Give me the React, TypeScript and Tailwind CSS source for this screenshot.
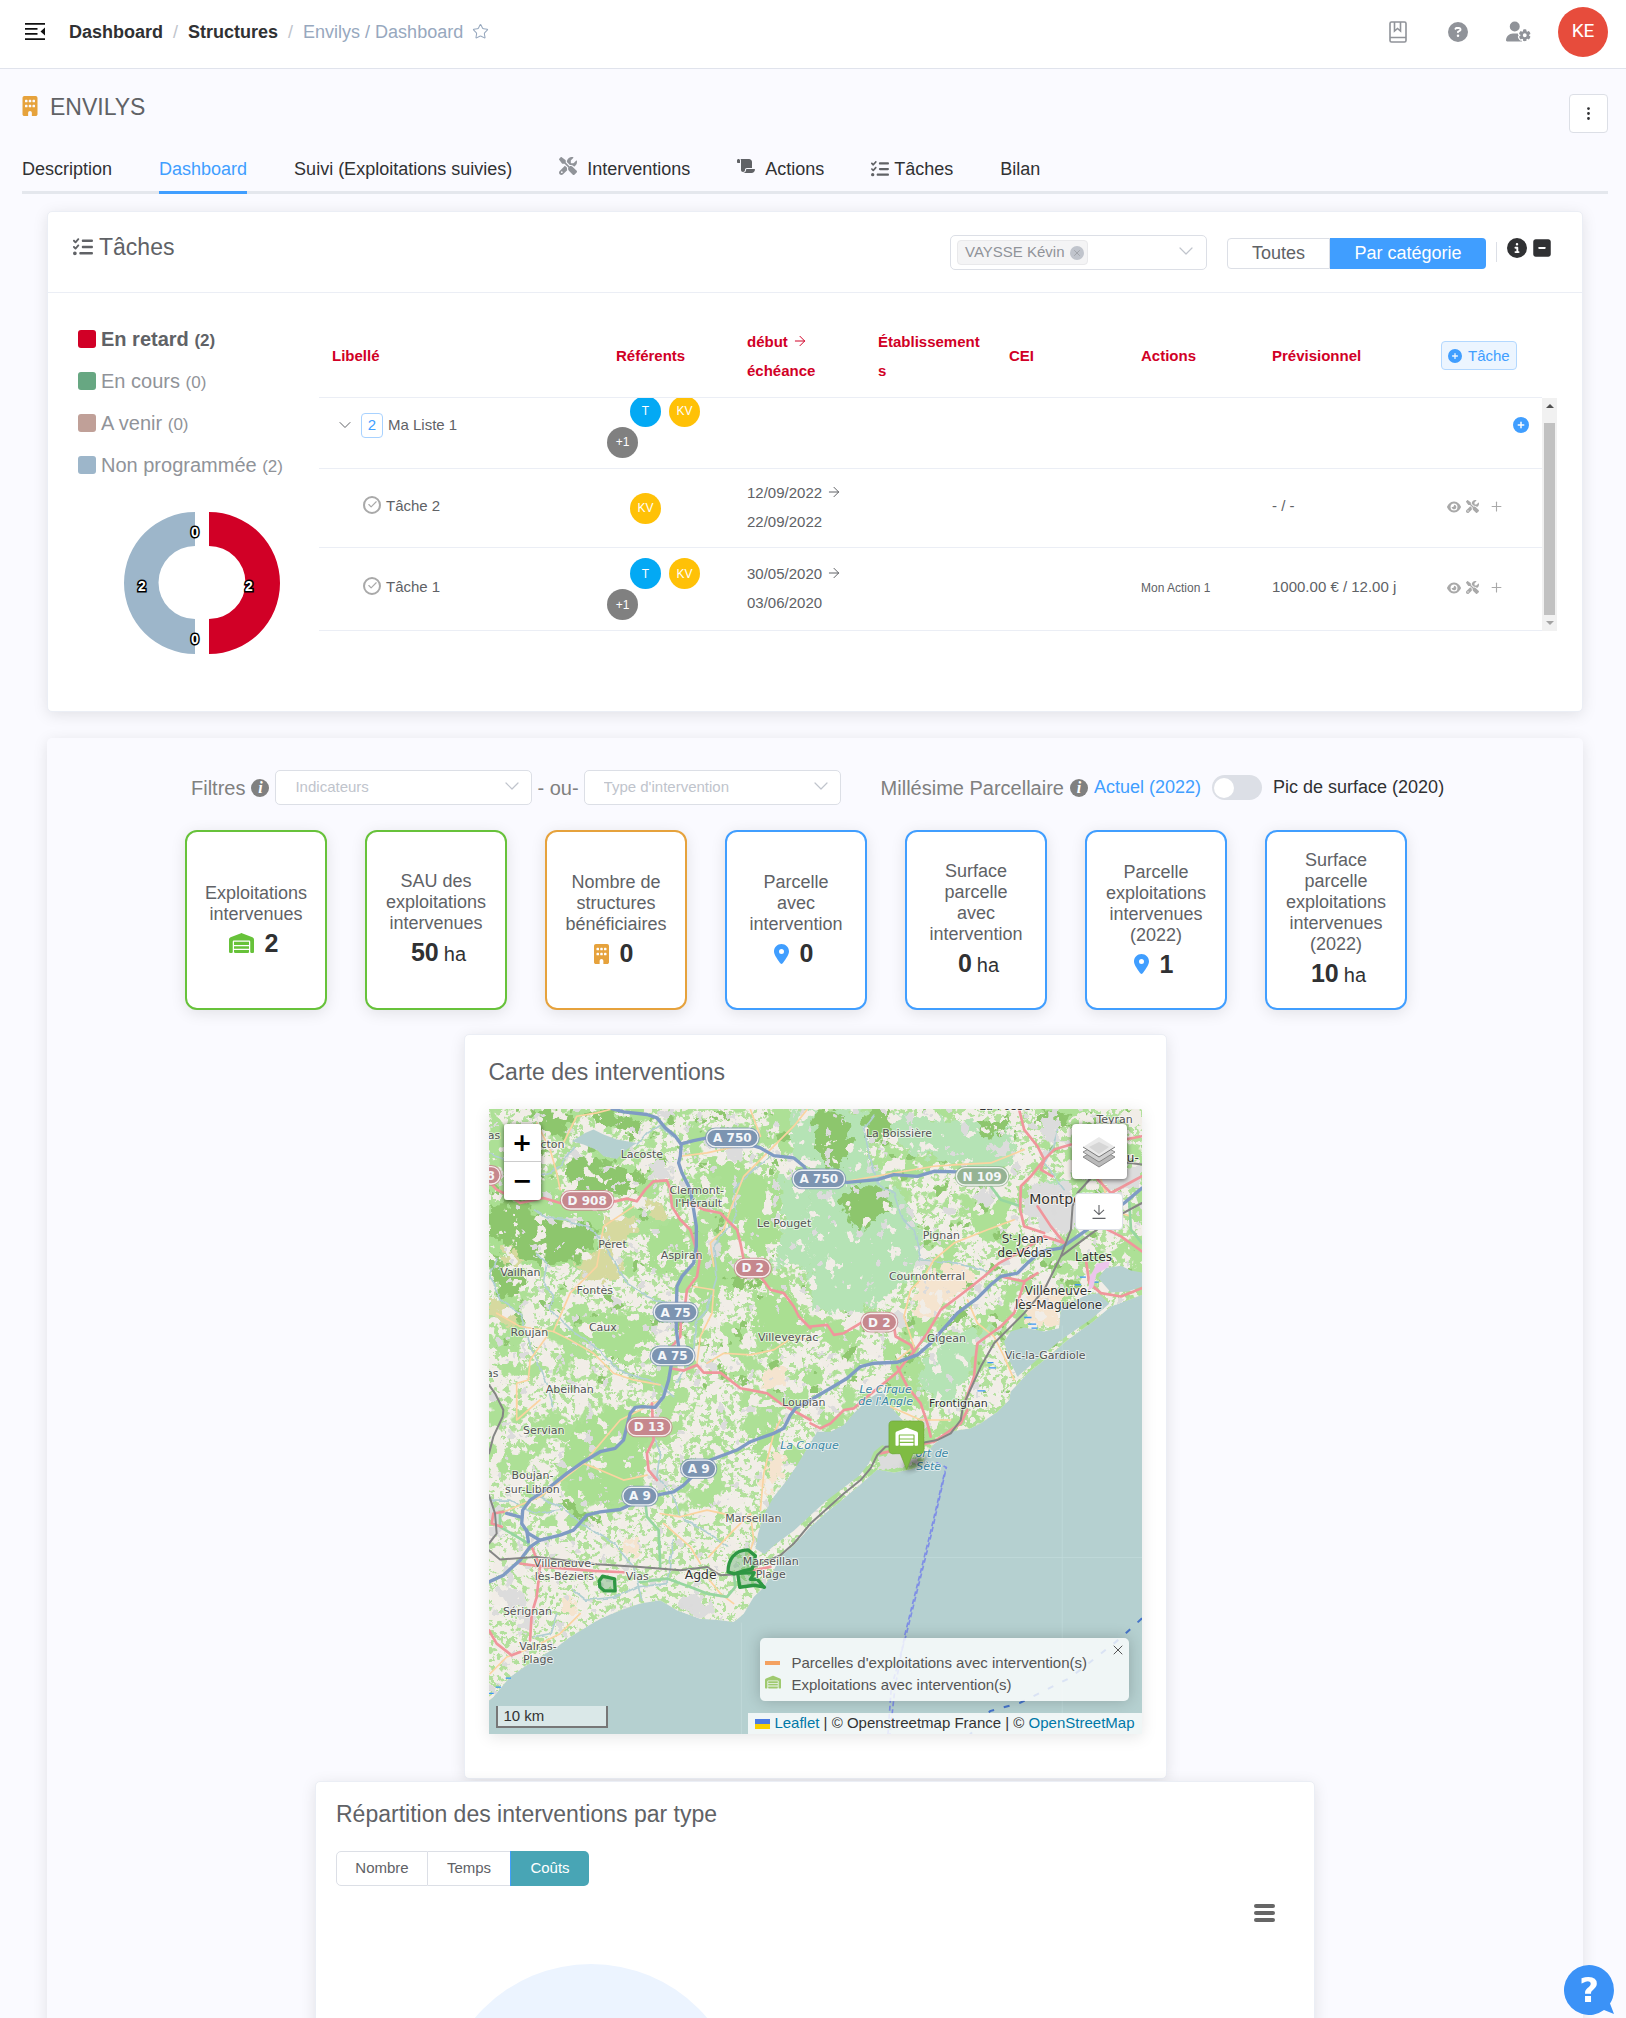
import React from "react";
import {
  FaBuilding,
  FaCircleInfo,
  FaCirclePlus,
  FaCircleQuestion,
  FaEye,
  FaListCheck,
  FaLocationDot,
  FaScrewdriverWrench,
  FaScroll,
  FaSquareMinus,
  FaUserGear,
  FaWarehouse,
} from "react-icons/fa6";
import { ArrowRight, Check, ChevronDown, EllipsisVertical, Plus, Star, X } from "lucide-react";

const cardShadow = "shadow-[0_3px_15px_rgba(0,0,0,0.1)]";

/* ---------- small icons ---------- */

function MenuFoldIcon() {
  return (
    <svg width="20" height="18" viewBox="0 0 20 18" fill="#111" aria-hidden="true">
      <path d="M0 0h20v1.700H0zM0 5h12.500v1.700H0zM0 10h12.500v1.700H0zM0 15.300h20V17H0zM20 4.500v8l-4.500-4z" />
    </svg>
  );
}

function BookIcon() {
  return (
    <svg width="18" height="22" viewBox="0 0 18 22" fill="none" stroke="#909399" strokeWidth="1.6" aria-hidden="true">
      <rect x="1" y="1" width="16" height="20" rx="1.500" />
      <path d="M1 16.500h16M5.500 1v9l3-2.500 3 2.500V1" />
    </svg>
  );
}

function ItalicInfo() {
  return (
    <span className="inline-flex size-[18px] shrink-0 items-center justify-center rounded-full bg-[#808080] font-['Liberation_Serif',serif] text-[16px] leading-none font-bold text-white italic">
      i
    </span>
  );
}

/* ---------- header ---------- */

function Header() {
  return (
    <header className="flex h-[69px] shrink-0 items-center border-b border-[#e0e3ec] bg-white pr-[18px] pb-[5px] pl-[25px]">
      <button aria-label="Replier le menu" className="mr-[24px]">
        <MenuFoldIcon />
      </button>
      <nav aria-label="Fil d'Ariane" className="flex items-center text-[18px] leading-[22px] text-[#303133]">
        <a href="#dashboard" className="font-bold">Dashboard</a>
        <span className="mx-[10px] text-[#c0c4cc]">/</span>
        <a href="#structures" className="font-bold">Structures</a>
        <span className="mx-[10px] text-[#c0c4cc]">/</span>
        <span className="text-[#97a8be]">Envilys / Dashboard</span>
        <button aria-label="Ajouter aux favoris" className="ml-[9px] text-[#97a8be]">
          <Star size={17} strokeWidth={1.5} />
        </button>
      </nav>
      <div className="ml-auto flex items-center text-[#909399]">
        <button aria-label="Documentation" className="mr-[41px]"><BookIcon /></button>
        <button aria-label="Aide" className="mr-[38px]"><FaCircleQuestion size={20} /></button>
        <button aria-label="Paramètres utilisateur" className="mr-[27px]"><FaUserGear size={25} /></button>
        <button className="size-[50px] rounded-full bg-[#e74c3c] font-[Roboto,sans-serif] text-[19px] text-white">KE</button>
      </div>
    </header>
  );
}

function TitleAndTabs() {
  const tab = "flex items-center pb-[10px] -mb-[3px] border-b-[3px]";
  return (
    <>
      <div className="flex items-start justify-between">
        <h1 className="flex items-center gap-[12px] text-[23px] leading-[26px] text-[#606266]">
          <FaBuilding size={20} className="-mx-[2px] mb-[3px] text-[#e6a23c]" />
          ENVILYS
        </h1>
        <button aria-label="Plus d'actions" className="flex h-[39px] w-[39px] items-center justify-center rounded-[4px] border border-[#dcdfe6] bg-white text-[#303133]">
          <EllipsisVertical size={17} />
        </button>
      </div>
      <nav className="mt-[24px] flex gap-[47px] border-b-[3px] border-[#e4e7ed] text-[18px] leading-[21px] text-[#303133]">
        <a href="#description" className={tab + " border-transparent"}>Description</a>
        <a href="#dashboard" aria-current="page" className={tab + " border-[#409eff] text-[#409eff]"}>Dashboard</a>
        <a href="#suivi" className={tab + " border-transparent"}>Suivi (Exploitations suivies)</a>
        <a href="#interventions" className={tab + " gap-[10px] border-transparent"}>
          <FaScrewdriverWrench size={18} className="mb-[6px] text-[#909399]" />Interventions
        </a>
        <a href="#actions" className={tab + " gap-[10px] border-transparent"}>
          <FaScroll size={18} className="mb-[6px] text-[#606266]" />Actions
        </a>
        <a href="#taches" className={tab + " gap-[5px] border-transparent"}>
          <FaListCheck size={18} className="text-[#606266]" />Tâches
        </a>
        <a href="#bilan" className={tab + " border-transparent"}>Bilan</a>
      </nav>
    </>
  );
}

/* ---------- tasks card ---------- */

const statuses = [
  { label: "En retard", count: 2, swatch: "bg-[#d10026]", active: true },
  { label: "En cours", count: 0, swatch: "bg-[#67a782]", active: false },
  { label: "A venir", count: 0, swatch: "bg-[#c0a098]", active: false },
  { label: "Non programmée", count: 2, swatch: "bg-[#9db6ca]", active: false },
];

function Donut() {
  const label = {
    fontSize: 14,
    fontWeight: 700,
    fill: "#fff",
    stroke: "#000",
    strokeWidth: 3,
    paintOrder: "stroke",
    textAnchor: "middle" as const,
    fontFamily: "Liberation Sans, sans-serif",
  };
  return (
    <svg width="156" height="144" viewBox="0 0 156 144" role="img" aria-label="Répartition des tâches par statut">
      <path d="M71 1A71 71 0 0 0 71 143V108A36.500 36.500 0 0 1 71 35Z" fill="#9db6ca" />
      <path d="M85 1A71 71 0 0 1 85 143V108A36.500 36.500 0 0 0 85 35Z" fill="#d10026" />
      <text x="71" y="26" {...label}>0</text>
      <text x="71" y="133" {...label}>0</text>
      <text x="18" y="80" {...label}>2</text>
      <text x="125" y="80" {...label}>2</text>
    </svg>
  );
}

function Avatar({ text, color }: { text: string; color: string }) {
  return (
    <span className={"flex size-[31px] items-center justify-center rounded-full text-[12px] leading-none text-white " + color}>
      {text}
    </span>
  );
}

function ThreeAvatars() {
  return (
    <div>
      <div className="ml-[23px] flex gap-[8px]">
        <Avatar text="T" color="bg-[#03a9f4]" />
        <Avatar text="KV" color="bg-[#ffc107]" />
      </div>
      <Avatar text="+1" color="bg-[#808080]" />
    </div>
  );
}

function Dates({ from, to }: { from: string; to: string }) {
  return (
    <span className="block leading-[29px]">
      <span className="flex items-center gap-[4px]">{from} <ArrowRight size={16} strokeWidth={1.5} /></span>
      {to}
    </span>
  );
}

function RowActions() {
  return (
    <div className="ml-[57px] flex items-center pb-[3px] text-[#a9a9a9]">
      <button aria-label="Voir"><FaEye size={14} /></button>
      <button aria-label="Intervention" className="ml-[5px]"><FaScrewdriverWrench size={13} /></button>
      <button aria-label="Ajouter" className="ml-[10px]"><Plus size={15} strokeWidth={1.8} /></button>
    </div>
  );
}

function Columns() {
  return (
    <colgroup>
      <col className="w-[284px]" />
      <col className="w-[131px]" />
      <col className="w-[131px]" />
      <col className="w-[131px]" />
      <col className="w-[132px]" />
      <col className="w-[131px]" />
      <col className="w-[131px]" />
      <col />
    </colgroup>
  );
}

function TaskTable() {
  const th = "px-[13px] pb-[3px] text-left font-bold";
  const td = "px-[13px] pb-[3px]";
  const row = "border-b border-[#ebeef5]";
  return (
    <div className="min-w-0 flex-1 text-[15px] text-[#606266]">
      <div className="pr-[15px]">
        <table className="w-full table-fixed">
          <Columns />
          <thead>
            <tr className="h-[79px] border-b border-[#ebeef5] leading-[29px] text-[#d10026]">
              <th className={th}>Libellé</th>
              <th className={th}>Référents</th>
              <th className={th}>
                <span className="flex items-center gap-[4px]">début <ArrowRight size={16} strokeWidth={1.5} /></span>
                échéance
              </th>
              <th className={th + " break-all"}>Établissements</th>
              <th className={th}>CEI</th>
              <th className={th}>Actions</th>
              <th className={th}>Prévisionnel</th>
              <th className="pb-[3px] text-left font-normal">
                <button className="ml-[51px] flex h-[29px] items-center gap-[6px] rounded-[4px] border border-[#b3d8ff] bg-[#ecf5ff] px-[6px] text-[15px] text-[#409eff]">
                  <FaCirclePlus size={14} />Tâche
                </button>
              </th>
            </tr>
          </thead>
        </table>
      </div>
      <div className="flex h-[233px]">
        <div className="min-w-0 flex-1 overflow-hidden">
          <table className="-mt-[12px] w-full table-fixed">
            <Columns />
            <tbody>
              <tr className={row + " h-[83px]"}>
                <td>
                  <div className="ml-[16px] flex items-center pb-[3px]">
                    <button aria-label="Replier la liste" className="text-[#606266]"><ChevronDown size={20} strokeWidth={1.2} /></button>
                    <span className="ml-[6px] flex h-[25px] w-[22px] items-center justify-center rounded-[4px] border border-[#a8d2ff] text-[#409eff]">2</span>
                    <span className="ml-[5px]">Ma Liste 1</span>
                  </div>
                </td>
                <td className="pl-[4px]"><ThreeAvatars /></td>
                <td /><td /><td /><td /><td />
                <td>
                  <button aria-label="Ajouter une tâche" className="mr-[13px] mb-[4px] ml-auto block text-[#409eff]"><FaCirclePlus size={16} /></button>
                </td>
              </tr>
              <tr className={row + " h-[79px]"}>
                <td><TaskName name="Tâche 2" /></td>
                <td className="pl-[27px]"><Avatar text="KV" color="bg-[#ffc107]" /></td>
                <td className={td}><Dates from="12/09/2022" to="22/09/2022" /></td>
                <td /><td /><td />
                <td className={td}>- / -</td>
                <td><RowActions /></td>
              </tr>
              <tr className={row + " h-[83px]"}>
                <td><TaskName name="Tâche 1" /></td>
                <td className="pl-[4px]"><ThreeAvatars /></td>
                <td className={td}><Dates from="30/05/2020" to="03/06/2020" /></td>
                <td /><td />
                <td className={td + " text-[12px]"}>Mon Action 1</td>
                <td className={td + " whitespace-nowrap"}>1000.00 € / 12.00 j</td>
                <td><RowActions /></td>
              </tr>
            </tbody>
          </table>
        </div>
        <div className="flex w-[15px] flex-col items-center justify-between bg-[#f1f1f1] py-[6px]" aria-hidden="true">
          <span className="border-x-4 border-b-4 border-x-transparent border-b-[#505050]" />
          <span className="mt-[15px] mb-[6px] w-[11px] flex-1 bg-[#c1c1c1]" />
          <span className="border-x-4 border-t-4 border-x-transparent border-t-[#a3a3a3]" />
        </div>
      </div>
    </div>
  );
}

function TaskName({ name }: { name: string }) {
  return (
    <div className="ml-[44px] flex items-center gap-[5px] pb-[3px]">
      <button aria-label={"Terminer " + name} className="mb-[4px] flex size-[18px] items-center justify-center rounded-full border-2 border-[#a9a9a9] text-[#a9a9a9]">
        <Check size={11} strokeWidth={2.5} />
      </button>
      {name}
    </div>
  );
}

function TasksCard() {
  return (
    <section className={"mx-[25px] mt-[17px] rounded-[5px] border border-[#ebeef5] bg-white " + cardShadow}>
      <div className="flex h-[81px] items-start border-b border-[#ebeef5] px-[25px] pt-[23px]">
        <h2 className="-mt-[2px] flex items-center gap-[6px] text-[23px] leading-[28px] text-[#606266]">
          <FaListCheck size={20} />Tâches
        </h2>
        <div className="ml-auto flex h-[35px] w-[257px] items-center rounded-[5px] border border-[#dcdfe6] px-[6px]">
          <span className="flex h-[25px] items-center gap-[5px] rounded-[4px] border border-[#e9e9eb] bg-[#f4f4f5] pr-[3px] pl-[7px] text-[15px] whitespace-nowrap text-[#909399]">
            VAYSSE Kévin
            <button aria-label="Retirer VAYSSE Kévin" className="flex size-[14px] items-center justify-center rounded-full bg-[#c0c4cc]">
              <X size={10} strokeWidth={1.5} />
            </button>
          </span>
          <button aria-label="Ouvrir la liste" className="mr-[2px] mb-[4px] ml-auto text-[#c0c4cc]"><ChevronDown size={24} strokeWidth={1.2} /></button>
        </div>
        <div role="radiogroup" aria-label="Affichage" className="mt-[3px] ml-[20px] flex h-[31px] text-[18px] text-[#606266]">
          <label className="flex w-[103px] items-center justify-center rounded-l-[4px] border border-[#dcdfe6]">
            <input type="radio" name="affichage" className="sr-only" />Toutes
          </label>
          <label className="flex w-[156px] items-center justify-center rounded-r-[4px] bg-[#409eff] text-white">
            <input type="radio" name="affichage" defaultChecked className="sr-only" />Par catégorie
          </label>
        </div>
        <span className="mt-[7px] ml-[10px] h-[20px] w-px bg-[#dcdfe6]" />
        <button aria-label="Informations" className="mt-[3px] ml-[10px] text-[#303133]"><FaCircleInfo size={20} /></button>
        <button aria-label="Réduire" className="mt-[3px] ml-[5px] text-[#303133]"><FaSquareMinus size={20} /></button>
        <span className="w-[5px]" />
      </div>
      <div className="flex min-h-[418px] pt-[25px] pr-[25px]">
        <div className="w-[271px] shrink-0 pl-[30px]">
          <ul>
            {statuses.map((s) => (
              <li key={s.label}>
                <button className={"flex h-[42px] items-center gap-[5px] text-[20px] whitespace-nowrap " + (s.active ? "font-bold text-[#606266]" : "text-[#909399]")}>
                  <span className={"size-[18px] rounded-[3px] " + s.swatch} />
                  <span>{s.label} <span className="text-[17px]">({s.count})</span></span>
                </button>
              </li>
            ))}
          </ul>
          <div className="mt-[25px] ml-[46px]"><Donut /></div>
        </div>
        <TaskTable />
      </div>
    </section>
  );
}

/* ---------- indicators ---------- */

function FilterSelect({ label, width }: { label: string; width: string }) {
  return (
    <span className={"relative " + width}>
      <select aria-label={label} defaultValue="" className="h-[35px] w-full appearance-none rounded-[5px] border border-[#dcdfe6] bg-white pl-[19px] text-[15px] text-[#c0c4cc]">
        <option value="">{label}</option>
      </select>
      <ChevronDown size={24} strokeWidth={1.2} className="pointer-events-none absolute top-[4px] right-[8px] text-[#c0c4cc]" />
    </span>
  );
}

function Filters() {
  return (
    <div className="ml-[144px] flex items-center text-[20px] whitespace-nowrap text-[#808080]">
      <span className="mr-[6px]">Filtres</span>
      <ItalicInfo />
      <span className="w-[6px]" />
      <FilterSelect label="Indicateurs" width="w-[257px]" />
      <span className="mx-[5px]">- ou-</span>
      <FilterSelect label="Type d'intervention" width="w-[257px]" />
      <span className="mr-[6px] ml-[40px]">Millésime Parcellaire</span>
      <ItalicInfo />
      <label className="ml-[6px] flex items-center text-[18px] text-[#303133]">
        <span className="mr-[11px] text-[#409eff]">Actuel (2022)</span>
        <input type="checkbox" role="switch" className="peer sr-only" />
        <span className="mr-[11px] flex h-[25px] w-[50px] items-center rounded-full bg-[#dcdfe6] px-[2px]">
          <span className="size-[20px] rounded-full bg-white" />
        </span>
        Pic de surface (2020)
      </label>
    </div>
  );
}

const pin = <FaLocationDot className="h-[20px] w-[15px] text-[#409eff]" />;

const indicators = [
  { border: "border-[#67c23a]", label: "Exploitations intervenues", icon: <FaWarehouse className="h-[20px] w-[25px] text-[#67c23a]" />, value: "2" },
  { border: "border-[#67c23a]", label: "SAU des exploitations intervenues", value: "50", unit: "ha" },
  { border: "border-[#e6a23c]", label: "Nombre de structures bénéficiaires", icon: <FaBuilding className="h-[20px] w-[15px] text-[#e6a23c]" />, value: "0" },
  { border: "border-[#409eff]", label: "Parcelle avec intervention", icon: pin, value: "0" },
  { border: "border-[#409eff]", label: "Surface parcelle avec intervention", value: "0", unit: "ha" },
  { border: "border-[#409eff]", label: "Parcelle exploitations intervenues (2022)", icon: pin, value: "1" },
  { border: "border-[#409eff]", label: "Surface parcelle exploitations intervenues (2022)", value: "10", unit: "ha" },
];

function Indicators() {
  return (
    <div className="mt-[25px] ml-[138px] flex gap-[38px]">
      {indicators.map((it) => (
        <article key={it.label} className={"flex h-[180px] w-[142px] flex-col items-center justify-center rounded-[12px] border-2 bg-white px-[17px] text-center shadow-[0_3px_15px_rgba(0,0,0,0.1)] " + it.border}>
          <p className="text-[18px] leading-[21px] text-[#606266]">{it.label}</p>
          <p className={"mt-[4px] flex items-baseline leading-[29px] text-[#303133] " + (it.unit ? "pl-[5px]" : "pr-[5px]")}>
            {it.icon && <span className="mr-[11px] self-center">{it.icon}</span>}
            <strong className="text-[25px]">{it.value}</strong>
            {it.unit && <span className="ml-[5px] text-[20px]">{it.unit}</span>}
          </p>
        </article>
      ))}
    </div>
  );
}

/* ---------- map ---------- */

type Pt = [number, number];
/* the map tiles are drawn in four quadrants; each has its own origin */
const line = (dx: number, dy: number, pts: Pt[]) => pts.map(([x, y]) => `${x + dx},${y + dy}`).join(" ");
const nw = (pts: Pt[]) => line(-87, -237, pts);
const ne = (pts: Pt[]) => line(963, -237, pts);
const sw = (pts: Pt[]) => line(-87, 873, pts);
const se = (pts: Pt[]) => line(963, 873, pts);

const land =
  "0,0 1956,0 1956,558 " +
  ne([[940, 815], [900, 830], [850, 872], [770, 930], [700, 990], [650, 1030], [600, 1085]]) + " " +
  se([[595, 0], [560, 35], [510, 70], [480, 85], [430, 92], [400, 112], [370, 132], [345, 160], [335, 195], [300, 208], [250, 217], [200, 208], [165, 240], [100, 295], [50, 335], [0, 380]]) + " " +
  sw([[1000, 435], [960, 470], [935, 520], [910, 560], [880, 590], [850, 640], [820, 665], [780, 660], [720, 655], [650, 630], [600, 600], [540, 610], [480, 630], [420, 655], [370, 685], [330, 710], [290, 740], [240, 770], [200, 795], [150, 830], [100, 890], [87, 900]]);

const waters = [
  sw([[1010, 195], [980, 240], [940, 290], [912, 340], [893, 400], [885, 445], [912, 462], [945, 432], [1000, 392], [1050, 345]]) + " " +
    se([[50, 300], [100, 262], [145, 228], [175, 190], [190, 155], [215, 135], [245, 150], [290, 130], [300, 110], [275, 60], [240, 20], [215, -30], [170, 0], [130, 40], [100, 75], [60, 95], [20, 95]]),
  ne([[600, 905], [640, 893], [700, 905], [745, 895], [750, 830], [830, 795], [862, 790], [895, 822], [840, 868], [750, 930], [690, 980], [620, 1040], [595, 990], [580, 935]]),
  ne([[862, 745], [885, 715], [930, 708], [960, 722], [993, 728], [993, 770], [950, 785], [900, 788]]),
  nw([[335, 335], [375, 310], [400, 300], [430, 315], [470, 330], [530, 340], [500, 360], [470, 388], [430, 380], [412, 362], [370, 345]]),
];

const forests = [
  nw([[87, 530], [190, 515], [230, 530], [220, 560], [300, 570], [370, 580], [410, 600], [400, 650], [340, 700], [270, 705], [200, 690], [130, 640], [87, 620]]),
  nw([[210, 240], [290, 237], [340, 260], [300, 320], [240, 300]]),
  nw([[320, 400], [370, 380], [440, 410], [510, 420], [560, 440], [500, 500], [440, 480], [360, 490], [320, 450]]),
  nw([[380, 255], [450, 245], [540, 285], [520, 310], [440, 280]]),
  nw([[87, 690], [150, 700], [200, 740], [180, 790], [120, 800]]),
  nw([[800, 740], [900, 750], [880, 780], [820, 770]]),
  ne([[10, 240], [80, 240], [120, 300], [115, 380], [60, 425], [20, 370]]),
  ne([[165, 245], [250, 240], [240, 310], [190, 340], [160, 300]]),
  ne([[90, 500], [150, 470], [230, 480], [250, 530], [180, 580], [140, 600], [90, 540]]),
  ne([[420, 850], [460, 820], [470, 850], [430, 890], [400, 900]]),
  ne([[690, 240], [760, 250], [780, 290], [720, 300]]),
  ne([[500, 280], [600, 265], [590, 300], [520, 330]]),
  sw([[310, 295], [380, 340], [415, 345], [410, 370], [350, 350], [300, 310]]),
];

const scrubs = [
  ne([[0, 430], [180, 400], [280, 500], [330, 620], [330, 700], [240, 800], [150, 850], [0, 840]]),
  ne([[240, 250], [480, 280], [600, 290], [620, 350], [560, 450], [440, 400], [300, 370], [240, 320]]),
  ne([[-60, 240], [160, 240], [170, 400], [60, 440], [-50, 380]]),
  nw([[960, 440], [1050, 430], [1050, 720], [940, 700], [970, 600]]),
  ne([[330, 1010], [430, 900], [500, 900], [560, 890], [490, 960], [470, 1050], [400, 1130], [320, 1060]]),
  ne([[700, 450], [780, 440], [760, 520], [700, 560]]),
];

const greens = [
  nw([[740, 390], [830, 400], [960, 470], [960, 620], [900, 690], [840, 640], [800, 520]]),
  nw([[300, 900], [420, 850], [560, 860], [590, 930], [500, 1010], [430, 960], [320, 930]]),
  sw([[290, 200], [360, 60], [500, 10], [570, 50], [550, 230], [450, 320], [340, 290]]),
  nw([[700, 600], [800, 620], [830, 760], [760, 840], [700, 780]]),
  sw([[860, 110], [980, 70], [930, 130], [900, 170]]),
  nw([[870, 800], [1000, 790], [1050, 900], [950, 960], [880, 900]]),
  nw([[87, 500], [420, 480], [430, 600], [400, 710], [200, 720], [87, 660]]),
  nw([[560, 620], [650, 560], [690, 640], [640, 740], [560, 720]]),
];

const heaths = [
  nw([[430, 570], [530, 560], [520, 620], [450, 650], [500, 700], [470, 750], [380, 755], [350, 700], [440, 650]]),
  nw([[560, 510], [610, 520], [620, 560], [570, 570]]),
  nw([[87, 800], [170, 860], [150, 900], [87, 850]]),
  nw([[300, 600], [370, 590], [370, 630], [310, 640]]),
  nw([[120, 650], [180, 655], [200, 700], [140, 705]]),
];

const towns = [
  sw([[660, 590], [720, 585], [750, 620], [740, 655], [650, 625]]),
  sw([[87, 290], [120, 320], [130, 400], [87, 430]]),
  sw([[110, 560], [180, 580], [200, 620], [120, 610]]),
  sw([[160, 640], [210, 630], [230, 680], [180, 680]]),
  sw([[585, 235], [620, 240], [622, 270], [590, 272]]),
  se([[200, 165], [270, 155], [330, 180], [280, 208], [200, 200]]),
  ne([[640, 470], [780, 450], [790, 600], [700, 600], [640, 560]]),
  ne([[690, 260], [730, 240], [740, 330], [700, 330]]),
  ne([[540, 350], [600, 340], [590, 380], [550, 380]]),
  ne([[490, 490], [530, 480], [540, 520], [510, 530]]),
  ne([[320, 680], [370, 690], [365, 720], [320, 715]]),
  ne([[250, 840], [290, 860], [300, 900], [255, 890]]),
  ne([[850, 400], [990, 410], [990, 480], [880, 480]]),
  nw([[560, 400], [630, 400], [630, 450], [570, 450]]),
  nw([[740, 630], [780, 640], [770, 680], [740, 670]]),
  nw([[730, 985], [770, 990], [765, 1020], [735, 1015]]),
  nw([[800, 350], [850, 365], [830, 395], [800, 390]]),
];

const sands = [
  ne([[330, 760], [420, 700], [500, 740], [420, 800], [370, 860], [300, 860]]),
  ne([[690, 760], [760, 790], [740, 890], [640, 870], [650, 800]]),
  sw([[480, 430], [530, 410], [535, 460], [500, 470]]),
  sw([[300, 590], [345, 600], [350, 650], [305, 630]]),
  sw([[940, 150], [980, 190], [920, 280], [900, 260]]),
  nw([[900, 1030], [970, 1010], [980, 1070], [900, 1080]]),
];

const rivers = [
  nw([[87, 370], [130, 390], [200, 400], [240, 440], [300, 410], [340, 350]]),
  nw([[530, 345], [560, 310], [600, 285], [640, 325]]),
  nw([[225, 540], [260, 565], [320, 570], [400, 600], [430, 640], [460, 690], [500, 760], [560, 800], [640, 830]]),
  nw([[110, 690], [90, 740], [120, 810], [180, 850], [200, 910], [220, 970], [260, 1060], [280, 1130]]),
  nw([[230, 670], [260, 700], [250, 760], [280, 800], [270, 840], [330, 900], [420, 960], [470, 1020], [590, 1060], [640, 1100]]),
  nw([[930, 380], [880, 420], [820, 480], [830, 560], [790, 610], [760, 650], [770, 740], [740, 840], [705, 880], [700, 980], [650, 1060]]),
  ne([[190, 260], [160, 300], [175, 370], [200, 460], [250, 490], [270, 560], [310, 600], [330, 690], [440, 700], [540, 730]]),
  ne([[740, 300], [730, 340], [700, 400], [760, 480]]),
  sw([[580, 110], [600, 150], [590, 230], [640, 290], [660, 350], [730, 390], [800, 440]]),
  sw([[200, 270], [300, 320], [380, 380], [460, 430], [520, 500], [545, 600]]),
  sw([[340, 570], [380, 600], [470, 590], [530, 560], [620, 550], [640, 420]]),
  sw([[87, 300], [150, 300], [220, 340], [300, 330]]),
  sw([[290, 640], [270, 700], [220, 710]]),
];

const minors = [
  nw([[230, 280], [270, 360], [290, 430], [300, 480]]),
  nw([[310, 340], [350, 260], [410, 250], [450, 240]]),
  nw([[660, 380], [740, 370], [830, 350], [900, 320], [870, 240]]),
  nw([[1040, 240], [1000, 290], [920, 370], [850, 440], [810, 540], [790, 600], [750, 640], [760, 710]]),
  nw([[110, 850], [180, 890], [280, 905], [330, 930], [400, 970], [460, 1030], [520, 1050], [600, 1065]]),
  nw([[280, 905], [330, 790], [410, 710], [430, 590], [520, 530]]),
  nw([[260, 920], [210, 990], [205, 1050], [170, 1060], [170, 1130]]),
  nw([[700, 770], [760, 780], [755, 850], [720, 920], [710, 1000]]),
  nw([[740, 1000], [790, 970], [870, 975], [940, 960], [1000, 920], [1050, 930]]),
  ne([[260, 990], [310, 950], [280, 860], [300, 780], [340, 740], [370, 690], [430, 640], [530, 600], [610, 570]]),
  ne([[110, 455], [250, 430], [370, 410], [440, 405], [540, 400], [640, 360]]),
  ne([[470, 810], [500, 880], [550, 920], [580, 980], [610, 1050]]),
  sw([[170, 0], [170, 60], [240, 0]]),
  sw([[120, 340], [240, 290], [370, 190], [480, 60], [600, 0]]),
  sw([[370, 190], [420, 210], [490, 240], [560, 225]]),
  sw([[600, 340], [660, 350], [740, 330], [810, 345]]),
  sw([[745, 470], [820, 390], [870, 340], [880, 420], [860, 480]]),
  sw([[900, 330], [910, 220], [940, 100], [960, 60]]),
  sw([[610, 370], [690, 440], [720, 490]]),
  sw([[90, 820], [140, 770], [220, 740], [300, 700], [360, 640]]),
  sw([[740, 530], [780, 580], [820, 610]]),
  ne([[870, 450], [900, 540], [960, 560]]),
  ne([[660, 500], [720, 520], [780, 500]]),
  se([[240, 20], [330, 60], [420, 60]]),
];

const trunks = [
  nw([[87, 455], [110, 480], [150, 500], [180, 520], [250, 505], [300, 520], [380, 515], [465, 515], [500, 507], [530, 515], [555, 480], [580, 455], [620, 452], [630, 480], [635, 530], [660, 570], [690, 600], [705, 650], [718, 690], [710, 740], [680, 780], [675, 820], [662, 870], [660, 920], [635, 950]]),
  nw([[690, 520], [730, 540], [780, 550], [800, 570], [830, 600], [840, 640], [850, 690], [900, 740], [930, 780], [970, 790], [1000, 830], [1015, 860], [1050, 895]]),
  ne([[0, 890], [50, 885], [70, 915], [100, 910], [150, 880], [200, 880], [250, 890], [255, 920], [300, 945], [310, 965], [280, 1000], [262, 1025], [220, 1060], [170, 1100], [130, 1135], [100, 1140], [60, 1180], [30, 1195], [0, 1180]]),
  ne([[310, 965], [350, 910], [390, 840], [450, 795], [520, 740], [565, 700], [640, 660], [700, 620], [760, 640]]),
  ne([[625, 240], [640, 300], [680, 350], [700, 390], [660, 440], [630, 470], [628, 540], [640, 590], [700, 610]]),
  ne([[780, 345], [730, 360], [700, 390], [690, 420], [725, 440]]),
  ne([[680, 530], [720, 590], [760, 640]]),
  ne([[870, 590], [930, 620], [993, 665]]),
  ne([[825, 690], [835, 760], [870, 790], [930, 800], [993, 775]]),
  ne([[570, 740], [640, 755], [680, 730]]),
  ne([[640, 760], [610, 850], [570, 890], [500, 940], [495, 980], [490, 1040], [465, 1110]]),
  ne([[940, 330], [993, 320]]),
  ne([[860, 450], [900, 490], [993, 440]]),
  ne([[260, 1010], [290, 1070], [330, 1120], [350, 1180], [360, 1220]]),
  nw([[630, 1015], [670, 1022], [710, 1005], [730, 1028], [780, 1028], [840, 1075], [920, 1090], [960, 1120]]) + " " + sw([[1050, 60]]),
  sw([[575, 10], [580, 120], [560, 160], [565, 210], [590, 240]]),
  sw([[180, 490], [250, 500], [400, 512], [490, 516]]),
  sw([[130, 335], [100, 340], [95, 370], [125, 380]]),
  sw([[215, 440], [240, 500], [230, 590], [215, 640], [210, 720]]),
  sw([[87, 690], [110, 730], [155, 765], [180, 755]]),
  se([[210, 160], [300, 140], [370, 125], [450, 70], [470, 30]]),
  sw([[840, 520], [880, 510], [930, 500]]),
];

const primaries = [
  ne([[540, 470], [570, 510], [630, 530]]),
  ne([[955, 520], [960, 600], [993, 640]]),
  sw([[120, 340], [120, 380], [205, 430]]),
  sw([[555, 300], [560, 350], [595, 390], [600, 500]]),
  sw([[690, 560], [740, 580], [800, 590], [825, 560], [820, 520]]),
  sw([[540, 545], [620, 535], [690, 560]]),
];

const motorways = [
  nw([[455, 237], [490, 247], [560, 255], [590, 265], [615, 295], [645, 320], [663, 345], [660, 380], [655, 400], [665, 430], [690, 480], [700, 540], [708, 590], [708, 650], [700, 700], [665, 740], [650, 770], [648, 850], [648, 900], [655, 950], [632, 1010], [625, 1050], [610, 1100], [585, 1132], [545, 1130]]) + " " +
    sw([[525, 22], [510, 40], [500, 80], [490, 120], [465, 145], [420, 155], [370, 185], [320, 220], [270, 260], [210, 300], [188, 330], [185, 370], [205, 400], [240, 420]]),
  nw([[663, 343], [700, 333], [740, 325], [820, 330], [900, 355], [940, 378], [1000, 385], [1030, 410], [1050, 445]]) + " " + ne([[110, 458], [200, 450], [250, 435], [320, 440], [370, 425], [440, 427]]),
  sw([[87, 545], [130, 525], [180, 480], [210, 440], [240, 420], [300, 405], [340, 390], [380, 345], [420, 335], [480, 328], [540, 300], [600, 283], [640, 275], [670, 255], [710, 215], [750, 180], [830, 150], [870, 125], [940, 100], [970, 85], [990, 45], [1005, 25]]) + " " +
    ne([[0, 1110], [60, 1075], [110, 1045], [150, 1010], [190, 1000], [260, 997], [320, 975], [360, 940], [400, 895], [440, 850], [500, 805], [540, 765], [570, 740], [620, 730], [650, 700], [690, 665], [750, 655], [800, 620], [850, 585], [940, 520], [993, 475]]),
  sw([[140, 340], [185, 352]]),
  sw([[205, 425], [200, 390]]),
];

const rails = [
  ne([[840, 445], [800, 490], [785, 530], [780, 600], [750, 680], [700, 780], [640, 850], [550, 940], [510, 1010], [465, 1110]]) + " " +
    se([[455, 30], [450, 60], [420, 100], [380, 120], [300, 135], [225, 140], [200, 165], [180, 205], [150, 240], [100, 280], [0, 370]]) + " " +
    sw([[1000, 430], [960, 465], [880, 500], [830, 522], [780, 525], [740, 500], [660, 510], [540, 500], [410, 492], [230, 470], [120, 478], [87, 450]]),
  ne([[750, 680], [830, 620], [900, 570], [993, 520]]),
  ne([[940, 398], [993, 405]]),
  nw([[87, 1065], [105, 1090], [130, 1140]]) + " " + sw([[128, 50], [100, 110], [87, 160]]),
  sw([[87, 285], [105, 340], [110, 400], [87, 430]]),
];

function TextureFilter({ id, freq, seed, r, g, b, k, t }: { id: string; freq: number; seed: number; r: number; g: number; b: number; k: number; t: number }) {
  return (
    <filter id={id} x="0" y="0" width="100%" height="100%" colorInterpolationFilters="sRGB">
      <feTurbulence type="fractalNoise" baseFrequency={freq} numOctaves={4} seed={seed} />
      <feColorMatrix values={`0 0 0 0 ${r} 0 0 0 0 ${g} 0 0 0 0 ${b} ${k} 0 0 0 ${-t}`} />
    </filter>
  );
}

type Place = { t: string; x: number; y: number; s?: number; c?: string; it?: boolean };
const V = "#555555";
const T = "#333333";
const W = "#3a87a5";
const places: Place[] = [
  { t: "as", x: 15, y: 92 }, { t: "cton", x: 190, y: 119 }, { t: "Lacoste", x: 458, y: 149 },
  { t: "Clermont-", x: 622, y: 257 }, { t: "l'Hérault", x: 628, y: 296 }, { t: "Le Pouget", x: 884, y: 356 },
  { t: "Péret", x: 370, y: 417 }, { t: "Aspiran", x: 577, y: 452 }, { t: "Vailhan", x: 94, y: 502 },
  { t: "Fontès", x: 317, y: 555 }, { t: "Caux", x: 341, y: 665 }, { t: "Roujan", x: 121, y: 682 },
  { t: "Villeveyrac", x: 896, y: 696 }, { t: "as", x: 10, y: 804 }, { t: "Abeilhan", x: 242, y: 853 },
  { t: "Loupian", x: 943, y: 891 }, { t: "La Boissière", x: 1228, y: 86 }, { t: "Teyran", x: 1874, y: 42 },
  { t: "Pignan", x: 1355, y: 392 }, { t: "Cournonterral", x: 1312, y: 515 }, { t: "Gigean", x: 1370, y: 699 },
  { t: "Vic-la-Gardiole", x: 1666, y: 751 }, { t: "Sᵗ-Jean-", x: 1605, y: 403, s: 36, c: T }, { t: "de-Védas", x: 1605, y: 444, s: 36, c: T },
  { t: "Lattes", x: 1811, y: 456, s: 36, c: T }, { t: "Villeneuve-", x: 1705, y: 558, s: 36, c: T }, { t: "lès-Maguelone", x: 1706, y: 602, s: 36, c: T },
  { t: "Montpellier", x: 1736, y: 287, s: 42, c: T }, { t: "Castelnau-", x: 1850, y: 160, s: 36, c: T }, { t: "La Fosse", x: 1545, y: 3, s: 36, c: T },
  { t: "Frontignan", x: 1406, y: 894, c: T }, { t: "Servian", x: 164, y: 975 }, { t: "Boujan-", x: 130, y: 1111 },
  { t: "sur-Libron", x: 130, y: 1151 }, { t: "Marseillan", x: 792, y: 1240 }, { t: "Villeneuve-", x: 226, y: 1373 },
  { t: "lès-Béziers", x: 226, y: 1411 }, { t: "Vias", x: 444, y: 1412 }, { t: "Agde", x: 634, y: 1409, s: 37, c: T },
  { t: "Marseillan", x: 844, y: 1366 }, { t: "Plage", x: 844, y: 1405 }, { t: "Sérignan", x: 115, y: 1517 },
  { t: "Valras-", x: 147, y: 1623 }, { t: "Plage", x: 147, y: 1662 },
  { t: "Le Cirque", x: 1188, y: 851, c: W, it: true }, { t: "de l'Angle", x: 1188, y: 889, c: W, it: true },
  { t: "La Conque", x: 960, y: 1019, c: W, it: true }, { t: "Port de", x: 1317, y: 1043, c: W, it: true }, { t: "Sète", x: 1317, y: 1082, c: W, it: true },
];

const shields: { t: string; x: number; y: number; w: number; c: string }[] = [
  { t: "A 750", x: 729, y: 88, w: 164, c: "#7c94b1" }, { t: "A 750", x: 988, y: 211, w: 164, c: "#7c94b1" },
  { t: "N 109", x: 1477, y: 203, w: 164, c: "#95b394" }, { t: "8", x: 5, y: 200, w: 66, c: "#c6878d" },
  { t: "D 908", x: 294, y: 275, w: 164, c: "#c6878d" }, { t: "D 2", x: 790, y: 478, w: 114, c: "#c6878d" },
  { t: "A 75", x: 559, y: 610, w: 138, c: "#7c94b1" }, { t: "A 75", x: 550, y: 741, w: 138, c: "#7c94b1" },
  { t: "D 2", x: 1169, y: 640, w: 114, c: "#c6878d" }, { t: "D 13", x: 480, y: 954, w: 140, c: "#c6878d" },
  { t: "A 9", x: 628, y: 1079, w: 112, c: "#7c94b1" }, { t: "A 9", x: 452, y: 1161, w: 112, c: "#7c94b1" },
];

function Polys({ list, fill }: { list: string[]; fill: string }) {
  return <g fill={fill}>{list.map((p, i) => <polygon key={i} points={p} />)}</g>;
}
function Roads({ list, stroke, width }: { list: string[]; stroke: string; width: number }) {
  return (
    <g fill="none" stroke={stroke} strokeWidth={width} strokeLinejoin="round" strokeLinecap="round">
      {list.map((p, i) => <polyline key={i} points={p} />)}
    </g>
  );
}

function MapDrawing() {
  return (
    <svg className="block h-full w-full" viewBox="0 0 1956 1875" preserveAspectRatio="xMidYMid slice" role="img" aria-label="Carte de l'Hérault">
      <defs>
        <clipPath id="land"><polygon points={land} /></clipPath>
        <TextureFilter id="vines" freq={0.01} seed={3} r={0.68} g={0.88} b={0.59} k={30} t={15} />
        <TextureFilter id="fields" freq={0.06} seed={8} r={0.7} g={0.88} b={0.61} k={16} t={8} />
        <TextureFilter id="wood" freq={0.018} seed={21} r={0.56} g={0.78} b={0.44} k={40} t={27} />
        <TextureFilter id="bare" freq={0.02} seed={14} r={0.945} g={0.93} b={0.905} k={30} t={18} />
        <TextureFilter id="bareLight" freq={0.022} seed={33} r={0.945} g={0.93} b={0.905} k={30} t={19.500} />
        <TextureFilter id="town" freq={0.025} seed={40} r={0.86} g={0.86} b={0.86} k={40} t={28} />
        <filter id="edges" x="-10%" y="-10%" width="120%" height="120%">
          <feTurbulence type="fractalNoise" baseFrequency={0.035} numOctaves={3} seed={5} />
          <feDisplacementMap in="SourceGraphic" scale={60} xChannelSelector="R" yChannelSelector="G" />
        </filter>
        <filter id="wiggle" x="-5%" y="-5%" width="110%" height="110%">
          <feTurbulence type="fractalNoise" baseFrequency={0.03} numOctaves={2} seed={9} />
          <feDisplacementMap in="SourceGraphic" scale={14} xChannelSelector="R" yChannelSelector="G" />
        </filter>
        <filter id="soft" x="-50%" y="-50%" width="200%" height="200%"><feGaussianBlur stdDeviation="9" /></filter>
      </defs>
      <rect width="1956" height="1875" fill="#b5d0d0" />
      <g clipPath="url(#land)">
        <rect width="1956" height="1875" fill="#f2efe9" />
        <rect width="1956" height="1875" filter="url(#fields)" />
        <rect width="1956" height="1250" filter="url(#vines)" />
        <rect width="1956" height="850" filter="url(#wood)" />
        <rect width="1956" height="1875" filter="url(#bare)" />
        <g filter="url(#edges)">
          <Polys list={greens} fill="#aadf92" />
          <Polys list={scrubs} fill="#b5e3b5" />
          <Polys list={heaths} fill="#d6d99f" />
          <Polys list={sands} fill="#f5e4cf" />
          <Polys list={forests} fill="#8dc66d" />
        </g>
        <rect width="1956" height="1875" filter="url(#bareLight)" />
        <g filter="url(#edges)"><Polys list={towns} fill="#dcdcdc" /></g>
        <rect width="1956" height="1875" filter="url(#town)" />
        <Polys list={waters} fill="#b5d0d0" />
        <g filter="url(#wiggle)"><Roads list={rivers} stroke="#b0cfd2" width={5} /></g>
        <Roads list={minors} stroke="#fbd3a0" width={5} />
        <Roads list={primaries} stroke="#97d6a0" width={8} />
        <Roads list={trunks} stroke="#f0969c" width={8} />
        <Roads list={motorways} stroke="#7f9bc4" width={10} />
      </g>
      <Roads list={rails} stroke="#858585" width={6} />
      <g stroke="#3b97f3" strokeWidth="4">
        <path d="M1603 626h22M1615 646h24M1625 658h18M1493 761h18M1497 777h22M1463 846h24M1770 505h18M1808 520h18M1755 528h18M50 1706h16M20 1733h16M0 1752h14" />
      </g>
      <path d="M1800 505l20-40 40-10-5 20-35 20-10 40-15 10z" fill="#ecc5ec" />
      <g stroke="#c4dcdc" strokeWidth="2"><path d="M756 1540V1875M1717 650V1875M900 1345H1956" /></g>

      <g fill="none" stroke="#7f8fe6" strokeWidth="5" strokeDasharray="15 9">
        <path d="M1340 1060l30 15-45 200-75 300-45 160-10 140" />
        <path d="M1366 1085l-45 190-75 300-30 160-15 140" strokeDashoffset="12" />
      </g>
      <path d="M1956 1527l-65 60-150 118-150 75-90 25-60 70" fill="none" stroke="#4573c9" strokeWidth="6" strokeDasharray="18 30" />

      <g stroke="#2e9743" strokeWidth="10" fill="#4ba65a" fillOpacity="0.35" strokeLinejoin="round">
        <path d="M330 1415l10-14 36 8 2 36-32 0-14-12z" />
        <path d="M716 1388c0-35 18-66 60-66l22 18-10 40-30 6-24 8z" />
        <path d="M745 1392l50-2-12 20 20 0 22 24-30-6-44 6z" />
      </g>

      <g fontFamily="'DejaVu Sans', sans-serif" textAnchor="middle" stroke="#fff" strokeOpacity="0.6" strokeWidth="6" strokeLinejoin="round" style={{ paintOrder: "stroke" }}>
        {places.map((p, i) => (
          <text key={i} x={p.x} y={p.y} fontSize={p.s ?? 33} fill={p.c ?? V} fontStyle={p.it ? "italic" : "normal"}>{p.t}</text>
        ))}
      </g>
      {shields.map((s, i) => (
        <g key={i}>
          <rect x={s.x - s.w / 2} y={s.y - 31} width={s.w} height="62" rx="31" fill={s.c} fillOpacity="0.8" />
          <rect x={s.x - s.w / 2 + 5} y={s.y - 26} width={s.w - 10} height="52" rx="26" fill={s.c} stroke="#fff" strokeOpacity="0.85" strokeWidth="4" />
          <text x={s.x} y={s.y + 13} textAnchor="middle" fontFamily="'DejaVu Sans', sans-serif" fontWeight="700" fontSize="36" fill="#f4f7fa">{s.t}</text>
        </g>
      ))}

      <ellipse cx="1275" cy="1062" rx="34" ry="14" fill="#000" opacity="0.55" transform="rotate(-25 1275 1062)" filter="url(#soft)" />
      <path d="M1210 936h81q12 0 12 12v74q0 12-12 12h-21l-19 47-19-47h-22q-12 0-12-12v-74q0-12 12-12z" fill="#7fbc43" stroke="#6da536" strokeWidth="2" />
      <svg x="1217" y="955" width="68" height="56" viewBox="0 0 640 512"><path fill="#fff" d="M0 488V171.300c0-26.200 15.900-49.700 40.200-59.400L308.100 4.800c7.600-3.100 16.100-3.100 23.800 0L599.800 111.900c24.300 9.700 40.200 33.300 40.200 59.400V488c0 13.300-10.700 24-24 24h-48c-13.300 0-24-10.700-24-24V224c0-17.700-14.300-32-32-32H128c-17.700 0-32 14.300-32 32v264c0 13.300-10.700 24-24 24H24c-13.300 0-24-10.700-24-24zm488 24H152c-13.300 0-24-10.700-24-24v-56h384v56c0 13.300-10.700 24-24 24zM128 400v-64h384v64H128zm0-96v-80h384v80H128z" /></svg>
    </svg>
  );
}

function LayersIcon() {
  return (
    <svg width="34" height="32" viewBox="0 0 34 32" aria-hidden="true">
      <path d="M1 21l16-9 16 9-16 10z" fill="#b9b9b9" stroke="#777" strokeWidth="0.800" />
      <path d="M1 16l16-9 16 9-16 10z" fill="#d0d0d0" stroke="#777" strokeWidth="0.800" />
      <path d="M1 11L17 1l16 10-16 10z" fill="#e9e9e9" />
      <path d="M7 11l10-5 10 5-10 7z" fill="#d6d6d6" />
      <path d="M1 11l16 10 16-10" fill="none" stroke="#777" />
    </svg>
  );
}

function MapCard() {
  const ctl = "flex w-[37px] items-center justify-center bg-white font-['DejaVu_Sans',sans-serif] text-[24px] leading-none font-bold text-black";
  return (
    <section className={"mx-auto mt-[24px] w-[703px] rounded-[5px] border border-[#ebeef5] bg-white px-[24px] pt-[23px] pb-[44px] " + cardShadow}>
      <h2 className="mb-[23px] text-[23px] leading-[28px] text-[#606266]">Carte des interventions</h2>
      <div className={"relative h-[625px] overflow-hidden text-[15px] text-[#333333] " + cardShadow}>
        <MapDrawing />
        <div className="absolute top-[15px] left-[15px] overflow-hidden rounded-[3px] shadow-[0_1px_5px_rgba(0,0,0,0.65)]">
          <button aria-label="Zoom avant" className={ctl + " h-[38px] border-b border-[#cccccc]"}>+</button>
          <button aria-label="Zoom arrière" className={ctl + " h-[38px]"}>−</button>
        </div>
        <button aria-label="Couches" className="absolute top-[15px] right-[15px] flex size-[55px] items-center justify-center rounded-[4px] bg-white shadow-[0_1px_5px_rgba(0,0,0,0.6)]">
          <LayersIcon />
        </button>
        <button aria-label="Télécharger" className="absolute top-[84px] right-[19px] flex h-[37px] w-[48px] items-center justify-center rounded-[4px] border border-[#dcdfe6] bg-white">
          <svg width="14" height="14" viewBox="0 0 14 14" fill="none" stroke="#606266" strokeWidth="1.100"><path d="M7 0v9.500M2 4.800l5 4.800 5-4.800M0.500 13.400h13" /></svg>
        </button>
        <div className="absolute right-[13px] bottom-[33px] w-[369px] rounded-[5px] bg-white/80 pt-[14px] pb-[5px] pl-[5px] text-[#555555] shadow-[0_0_15px_rgba(0,0,0,0.2)]">
          <button aria-label="Fermer la légende" className="absolute top-[4px] right-[3px]"><X size={16} strokeWidth={1.5} /></button>
          <p className="flex items-center leading-[22px]"><span className="mr-[12px] h-[4px] w-[15px] bg-[#f4a261]" />Parcelles d'exploitations avec intervention(s)</p>
          <p className="flex items-center leading-[22px]"><FaWarehouse size={16} className="mr-[11px] mb-[6px] text-[#9fca6f]" />Exploitations avec intervention(s)</p>
        </div>
        <div className="absolute bottom-[6px] left-[7px] h-[22px] w-[112px] border-2 border-t-0 border-[#777777] bg-white/50 pl-[6px] leading-[20px]">10 km</div>
        <p className="absolute right-0 bottom-0 flex h-[21px] items-center bg-white/80 px-[7px] whitespace-nowrap">
          <span className="mr-[4px] block h-[10px] w-[15px] border-b-5 border-[#f8d000] bg-[#4c7be1]" />
          <a href="#leaflet" className="text-[#0078a8]">Leaflet</a>&nbsp;| © Openstreetmap France | ©&nbsp;<a href="#osm" className="text-[#0078a8]">OpenStreetMap</a>
        </p>
      </div>
    </section>
  );
}

/* ---------- breakdown by type ---------- */

function BreakdownCard() {
  const opt = "flex items-center justify-center border-y border-[#dcdfe6]";
  return (
    <section className={"relative mx-auto mt-[2px] w-[1000px] rounded-[5px] border border-[#ebeef5] bg-white px-[20px] pt-[18px] " + cardShadow}>
      <h2 className="text-[23px] leading-[28px] text-[#606266]">Répartition des interventions par type</h2>
      <div role="radiogroup" aria-label="Mesure" className="mt-[23px] flex h-[35px] text-[15px] text-[#606266]">
        <label className={opt + " w-[92px] rounded-l-[5px] border-x"}><input type="radio" name="mesure" className="sr-only" />Nombre</label>
        <label className={opt + " w-[82px]"}><input type="radio" name="mesure" className="sr-only" />Temps</label>
        <label className="flex w-[79px] items-center justify-center rounded-r-[5px] border-l border-[#409eff] bg-[#48a5b5] text-white">
          <input type="radio" name="mesure" defaultChecked className="sr-only" />Coûts
        </label>
      </div>
      <div className="mt-[18px] mr-[19px] flex justify-end">
        <button aria-label="Menu du graphique" className="flex flex-col gap-[3px]">
          <span className="h-[4px] w-[21px] rounded-sm bg-[#666666]" />
          <span className="h-[4px] w-[21px] rounded-sm bg-[#666666]" />
          <span className="h-[4px] w-[21px] rounded-sm bg-[#666666]" />
        </button>
      </div>
      <svg className="mt-[42px] ml-[103px] block" width="304" height="304" viewBox="0 0 304 304" role="img" aria-label="Coûts par type d'intervention">
        <circle cx="152" cy="152" r="152" fill="#ecf4ff" />
      </svg>
    </section>
  );
}

export default function App() {
  return (
    <div className="flex h-screen flex-col overflow-hidden bg-[#fafaff] font-['Liberation_Sans',Arial,sans-serif]">
      <Header />
      <main className="min-h-0 flex-1 overflow-hidden">
        <div className="pt-[25px] pr-[18px] pl-[22px]">
          <TitleAndTabs />
          <TasksCard />
          <div className={"mx-[25px] mt-[26px] rounded-[5px] pt-[32px] pb-[40px] " + cardShadow}>
            <Filters />
            <Indicators />
            <MapCard />
            <BreakdownCard />
          </div>
        </div>
      </main>
      <button aria-label="Aide en ligne" className="fixed right-[12px] bottom-[3px] size-[50px]">
        <svg width="50" height="50" viewBox="0 0 50 50">
          <path d="M25 0a25 25 0 1 0 15 45l10 4-4-10.500A25 25 0 0 0 25 0z" fill="#3b92f7" />
          <text x="25" y="37" textAnchor="middle" fontFamily="'DejaVu Sans', sans-serif" fontWeight="700" fontSize="34" fill="#fff">?</text>
        </svg>
      </button>
    </div>
  );
}
